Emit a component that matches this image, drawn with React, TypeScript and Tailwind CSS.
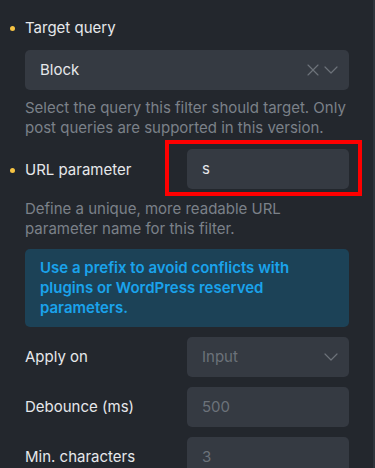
import { X, ChevronDown } from "lucide-react";

function Dot() {
  return <span className="absolute left-[-15px] top-[8px] h-[5px] w-[5px] rounded-full bg-[#f6c343]" />;
}

function Field({ value, muted, chevron }: { value: string; muted?: boolean; chevron?: boolean }) {
  return (
    <div className="flex h-10 w-[162px] items-center rounded-[5px] bg-[#353a42] pl-[15px] pr-[6px]">
      <span className={muted ? "flex-1 text-[#6c727a]" : "flex-1 text-[#e6e8eb]"}>{value}</span>
      {chevron && <ChevronDown size={24} className="text-[#6c727a]" strokeWidth={1.2} />}
    </div>
  );
}

function Row({ label, children }: { label: string; children: React.ReactNode }) {
  return (
    <div className="flex items-center justify-between">
      <span className="text-[#e6e8eb]">{label}</span>
      {children}
    </div>
  );
}

export default function App() {
  return (
    <div
      className="h-[468px] w-[375px] overflow-hidden border-r-2 border-[#2f343b] bg-[#23272d] text-[15px] leading-5"
      style={{ fontFamily: "Inter, 'Noto Sans', sans-serif" }}
    >
      <div className="flex w-[349px] flex-col pl-[25px] pt-[18px]">
        <div className="relative">
          <Dot />
          <span className="text-[#e6e8eb]">Target query</span>
        </div>

        <div className="mt-[12px] flex h-10 items-center rounded-[5px] bg-[#353a42] pl-[15px] pr-[6px]">
          <span className="flex-1 text-[#e6e8eb]">Block</span>
          <X size={20} className="text-[#6c727a]" strokeWidth={1.4} />
          <ChevronDown size={24} className="ml-[-4px] text-[#6c727a]" strokeWidth={1.2} />
        </div>

        <p className="mt-[8px] text-[#7b8189]">
          Select the query this filter should target. Only post queries are supported in this version.
        </p>

        <div className="mt-[11px] flex items-center justify-between">
          <span className="relative mt-[1px] text-[#e6e8eb]">
            <Dot />
            URL parameter
          </span>
          <div className="relative">
            <Field value="s" />
            <div className="pointer-events-none absolute bottom-[-7px] left-[-22px] right-[-13px] top-[-9px] border-4 border-[#ff0000]" />
          </div>
        </div>

        <p className="mt-[10px] pr-[30px] text-[#7b8189]">
          Define a unique, more readable URL parameter name for this filter.
        </p>

        <div className="mt-[10px] rounded-[5px] bg-[#1c4257] px-[15px] py-[9px] font-semibold text-[#1aa3ec]">
          Use a prefix to avoid conflicts with plugins or WordPress reserved parameters.
        </div>

        <div className="mt-[10px] flex flex-col gap-[10px]">
          <Row label="Apply on">
            <Field value="Input" muted chevron />
          </Row>
          <Row label="Debounce (ms)">
            <Field value="500" muted />
          </Row>
          <Row label="Min. characters">
            <Field value="3" muted />
          </Row>
        </div>
      </div>
    </div>
  );
}
